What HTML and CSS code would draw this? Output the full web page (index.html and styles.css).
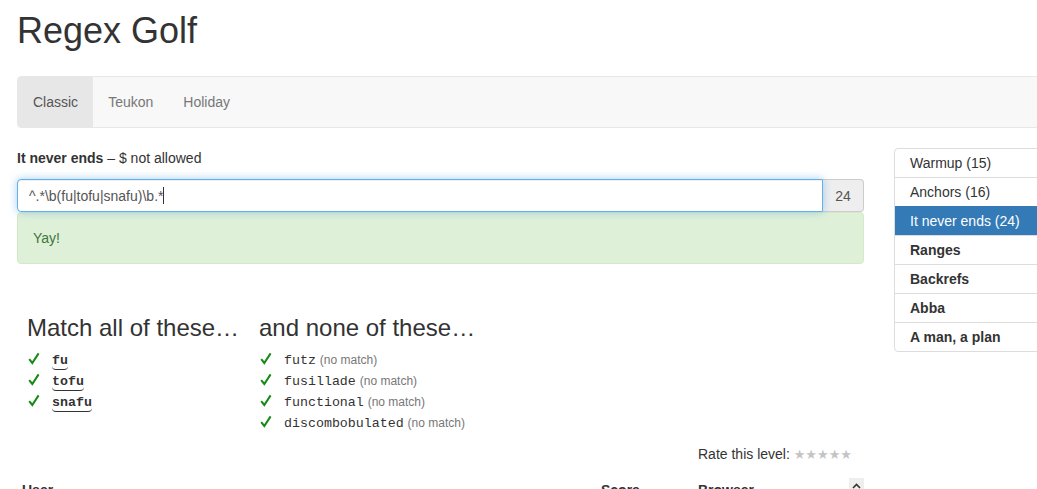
FILE: index.html
```html
<!DOCTYPE html>
<html lang="en">
<head>
<meta charset="utf-8">
<title>Regex Golf</title>
<link rel="stylesheet" href="styles.css">
</head>
<body>
<div class="page">
  <h1 class="title">Regex Golf</h1>
  <nav class="navbar">
    <a class="nav-link active" href="#">Classic</a>
    <a class="nav-link" href="#">Teukon</a>
    <a class="nav-link" href="#">Holiday</a>
  </nav>
  <div class="row">
    <main class="main-col">
      <div class="level-label"><strong>It never ends</strong> – $ not allowed</div>
      <div class="input-group">
        <div class="regex-input">^.*\b(fu|tofu|snafu)\b.*<span class="caret"></span></div>
        <span class="addon">24</span>
      </div>
      <div class="alert">Yay!</div>

      <div class="lists">
        <section class="list-col match-col">
          <h3 class="list-title">Match all of these…</h3>
          <ul class="words">
            <li><span class="check"><svg width="12" height="13" viewBox="0 0 12 13"><path d="M1.2 7.2 L4.3 11 L10.6 1.4" fill="none" stroke="#138a13" stroke-width="2"/></svg></span><code class="word hit">fu</code></li>
            <li><span class="check"><svg width="12" height="13" viewBox="0 0 12 13"><path d="M1.2 7.2 L4.3 11 L10.6 1.4" fill="none" stroke="#138a13" stroke-width="2"/></svg></span><code class="word hit">tofu</code></li>
            <li><span class="check"><svg width="12" height="13" viewBox="0 0 12 13"><path d="M1.2 7.2 L4.3 11 L10.6 1.4" fill="none" stroke="#138a13" stroke-width="2"/></svg></span><code class="word hit">snafu</code></li>
          </ul>
        </section>
        <section class="list-col">
          <h3 class="list-title">and none of these…</h3>
          <ul class="words">
            <li><span class="check"><svg width="12" height="13" viewBox="0 0 12 13"><path d="M1.2 7.2 L4.3 11 L10.6 1.4" fill="none" stroke="#138a13" stroke-width="2"/></svg></span><code class="word">futz</code> <span class="note">(no match)</span></li>
            <li><span class="check"><svg width="12" height="13" viewBox="0 0 12 13"><path d="M1.2 7.2 L4.3 11 L10.6 1.4" fill="none" stroke="#138a13" stroke-width="2"/></svg></span><code class="word">fusillade</code> <span class="note">(no match)</span></li>
            <li><span class="check"><svg width="12" height="13" viewBox="0 0 12 13"><path d="M1.2 7.2 L4.3 11 L10.6 1.4" fill="none" stroke="#138a13" stroke-width="2"/></svg></span><code class="word">functional</code> <span class="note">(no match)</span></li>
            <li><span class="check"><svg width="12" height="13" viewBox="0 0 12 13"><path d="M1.2 7.2 L4.3 11 L10.6 1.4" fill="none" stroke="#138a13" stroke-width="2"/></svg></span><code class="word">discombobulated</code> <span class="note">(no match)</span></li>
          </ul>
        </section>
      </div>

      <div class="rating">Rate this level: <span class="stars">★★★★★</span></div>

      <div class="table-head">
        <div class="th th-user">User</div>
        <div class="th th-score">Score</div>
        <div class="th th-browser">Browser<span class="sort-btn"><svg width="9" height="6" viewBox="0 0 9 6"><path d="M1 5 L4.5 1.5 L8 5" fill="none" stroke="#333" stroke-width="1.6"/></svg></span></div>
      </div>
    </main>
    <aside class="side-col">
      <div class="list-group">
        <a class="lg-item" href="#">Warmup (15)</a>
        <a class="lg-item" href="#">Anchors (16)</a>
        <a class="lg-item active" href="#">It never ends (24)</a>
        <a class="lg-item locked" href="#">Ranges</a>
        <a class="lg-item locked" href="#">Backrefs</a>
        <a class="lg-item locked" href="#">Abba</a>
        <a class="lg-item locked" href="#">A man, a plan</a>
      </div>
    </aside>
  </div>
</div>
</body>
</html>
```

FILE: styles.css
```css
html, body {
  margin: 0;
  overflow: hidden;
}
body {
  font-family: "Liberation Sans", Arial, sans-serif;
  font-size: 14px;
  line-height: 20px;
  color: #333;
  background: #fff;
}
.page {
  width: 1138px;
  padding-left: 17px;
}
.title {
  margin: 11px 0 0;
  font-size: 36px;
  font-weight: 500;
  line-height: 40px;
  color: #333;
}
.navbar {
  margin-top: 25px;
  display: flex;
  height: 50px;
  background: #f8f8f8;
  border: 1px solid #e7e7e7;
  border-radius: 4px;
  overflow: hidden;
}
.nav-link {
  padding: 15px;
  line-height: 20px;
  color: #777;
  text-decoration: none;
}
.nav-link.active {
  background: #e7e7e7;
  color: #555;
}
.row {
  display: flex;
  gap: 30px;
  margin-top: 20px;
}
.main-col {
  width: 847px;
  flex: none;
}
.side-col {
  width: 261px;
  flex: none;
}
.level-label {
  line-height: 20px;
  margin-bottom: 11px;
}
.level-label strong {
  font-weight: 700;
}
.input-group {
  display: flex;
  height: 33px;
}
.regex-input {
  flex: 1;
  box-sizing: border-box;
  height: 33px;
  padding: 6px 11px;
  border: 1px solid #66afe9;
  border-radius: 4px 0 0 4px;
  box-shadow: inset 0 1px 1px rgba(0,0,0,.075), 0 0 8px rgba(102,175,233,.6);
  font-size: 14px;
  line-height: 20px;
  color: #555;
  position: relative;
  z-index: 1;
  background: #fff;
}
.caret {
  display: inline-block;
  width: 1px;
  height: 17px;
  background: #333;
  vertical-align: -3px;
}
.addon {
  box-sizing: border-box;
  width: 41px;
  height: 33px;
  padding: 6px 0;
  text-align: center;
  background: #eee;
  border: 1px solid #ccc;
  border-left: 0;
  border-radius: 0 4px 4px 0;
  color: #555;
}
.alert {
  padding: 15px;
  background: #dff0d8;
  border: 1px solid #d6e9c6;
  border-radius: 4px;
  color: #3c763d;
  line-height: 20px;
}
.lists {
  display: flex;
  padding-left: 10px;
  margin-top: 51px;
}
.match-col {
  width: 232px;
}
.list-title {
  margin: 0 0 8px;
  font-size: 24px;
  font-weight: 500;
  line-height: 26px;
  color: #333;
}
.words {
  list-style: none;
  margin: 0;
  padding: 0;
}
.words li {
  line-height: 21px;
  height: 21px;
  white-space: nowrap;
}
.check {
  display: inline-block;
  width: 25px;
  vertical-align: -1px;
}
.check svg {
  display: block;
  margin-left: 1px;
}
.word {
  font-family: "Liberation Mono", "Courier New", monospace;
  font-size: 13.3px;
  color: #333;
}
.word.hit {
  font-weight: 700;
  border-bottom: 1px solid #333;
  border-radius: 0 0 4px 4px;
  padding-bottom: 1px;
}
.note {
  font-size: 12px;
  color: #777;
}
.rating {
  margin-top: 11px;
  text-align: right;
  padding-right: 12px;
  line-height: 20px;
  color: #333;
}
.stars {
  font-family: "DejaVu Sans", sans-serif;
  font-size: 13px;
  color: #c4c4c4;
  letter-spacing: 0;
}
.table-head {
  display: grid;
  grid-template-columns: 579px 97px 1fr;
  margin-top: 10px;
  font-weight: 700;
}
.th {
  padding: 5px;
  line-height: 20px;
}
.th-browser {
  display: flex;
  justify-content: space-between;
  padding-right: 0;
}
.sort-btn {
  display: flex;
  align-items: center;
  justify-content: center;
  width: 15px;
  height: 16px;
  margin-top: -2px;
  background: #eee;
}
.list-group {
  border: 1px solid #ddd;
  border-radius: 4px;
  overflow: hidden;
}
.lg-item {
  display: block;
  padding: 4px 15px;
  line-height: 20px;
  color: #333;
  text-decoration: none;
  border-top: 1px solid #ddd;
}
.lg-item:first-child {
  border-top: 0;
}
.lg-item.active {
  background: #337ab7;
  color: #fff;
  border-top-color: #337ab7;
}
.lg-item.locked {
  font-weight: 700;
}
```
